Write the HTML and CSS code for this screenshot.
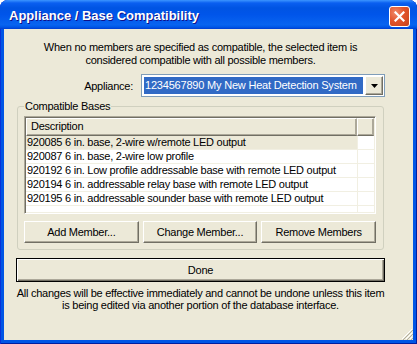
FILE: index.html
```html
<html>

<head>
  <meta name="viewport" content="width=device-width, initial-scale=1">
  <link rel="stylesheet" href="styles.css">
</head>

<body>
  <div class="window">
    <div class="titlebar">
      <span class="title">Appliance / Base Compatibility</span>
      <span class="close">
        <svg width="11" height="11" viewBox="0 0 11 11">
          <path d="M1.5 1.5 L9.5 9.5 M9.5 1.5 L1.5 9.5" stroke="#fff" stroke-width="2.2" stroke-linecap="square" />
        </svg>
      </span>
    </div>

    <div class="client">
      <p class="intro">
        When no members are specified as compatible, the selected item is<br>
        considered compatible with all possible members.
      </p>

      <div class="appliance-row">
        <span class="label">Appliance:</span>
        <div class="combo">
          <span class="combo-value">1234567890 My New Heat Detection System</span>
          <span class="combo-btn">
            <svg width="7" height="4" viewBox="0 0 7 4"><path d="M0 0 H7 L3.5 4 Z" fill="#000" /></svg>
          </span>
        </div>
      </div>

      <fieldset class="group">
        <legend>Compatible Bases</legend>
        <div class="list">
          <div class="list-head">
            <span class="col-desc">Description</span>
            <span class="col-extra"></span>
          </div>
          <div class="row selected">
            <span class="col-desc">920085 6 in. base, 2-wire w/remote LED output</span>
            <span class="col-extra"></span>
          </div>
          <div class="row">
            <span class="col-desc">920087 6 in. base, 2-wire low profile</span>
            <span class="col-extra"></span>
          </div>
          <div class="row">
            <span class="col-desc">920192 6 in. Low profile addressable base with remote LED output</span>
            <span class="col-extra"></span>
          </div>
          <div class="row">
            <span class="col-desc">920194 6 in. addressable relay base with remote LED output</span>
            <span class="col-extra"></span>
          </div>
          <div class="row">
            <span class="col-desc">920195 6 in. addressable sounder base with remote LED output</span>
            <span class="col-extra"></span>
          </div>
          <div class="row empty">
            <span class="col-desc"></span>
            <span class="col-extra"></span>
          </div>
        </div>

        <div class="buttons">
          <button class="btn">Add Member...</button>
          <button class="btn">Change Member...</button>
          <button class="btn">Remove Members</button>
        </div>
      </fieldset>

      <button class="btn done">Done</button>

      <p class="note">
        All changes will be effective immediately and cannot be undone unless this item<br>
        is being edited via another portion of the database interface.
      </p>

      <svg class="grip" width="12" height="12" viewBox="0 0 12 12">
        <path d="M11 1 L1 11 M11 5 L5 11 M11 9 L9 11" stroke="#fff" stroke-width="1" />
        <path d="M12 2 L2 12 M12 6 L6 12 M12 10 L10 12" stroke="#B0AD9E" stroke-width="1" />
      </svg>
    </div>
  </div>
</body>

</html>
```

FILE: styles.css
```css
  * {
    box-sizing: border-box;
  }

  body {
    margin: 0;
    font-family: "Liberation Sans", Arial, sans-serif;
    font-size: 11px;
    letter-spacing: -0.25px;
    color: #000000;
    background: #ffffff;
  }

  .window {
    width: 417px;
    height: 344px;
    display: flex;
    flex-direction: column;
    background: #0055e5;
    border-radius: 8px 8px 0 0;
    box-shadow: inset 1px 0 #0831d9, inset -1px 0 #001ea0, inset 0 -1px #001ea0;
  }

  .titlebar {
    height: 29px;
    display: flex;
    align-items: center;
    justify-content: space-between;
    padding: 0 7px 0 9px;
    border-radius: 8px 8px 0 0;
    background: linear-gradient(#3c95ff 0, #0a5ff0 3px, #0054e3 8px, #0055ea 50%, #0864f0 85%, #0058e8 93%, #003dd0 100%);
  }

  .title {
    color: #ffffff;
    font-weight: bold;
    font-size: 13px;
    letter-spacing: 0;
    text-shadow: 1px 1px #0f1089;
    margin-top: 2px;
  }

  .close {
    width: 21px;
    height: 21px;
    margin-top: 3px;
    display: flex;
    align-items: center;
    justify-content: center;
    border: 1px solid #ffffff;
    border-radius: 3px;
    background: radial-gradient(circle at 30% 30%, #f08a6a 0, #e2542c 45%, #c7431b 100%);
  }

  .client {
    flex: 1;
    margin: 0 4px 4px;
    padding: 12px 28px 0 12px;
    background: #ece9d8;
    display: flex;
    flex-direction: column;
    position: relative;
  }

  .intro {
    margin: 0;
    text-align: center;
    line-height: 13px;
  }

  .appliance-row {
    margin-top: 7px;
    display: flex;
    justify-content: flex-end;
    align-items: center;
    gap: 8px;
  }

  .combo {
    width: 244px;
    height: 23px;
    display: flex;
    padding: 1px;
    border: 1px solid #7f9db9;
    background: #ffffff;
  }

  .combo-value {
    flex: 1;
    min-width: 0;
    margin: 1px 2px 1px 1px;
    padding-left: 1px;
    background: #316ac5;
    color: #ffffff;
    font-size: 11px;
    letter-spacing: -0.2px;
    line-height: 17px;
    white-space: nowrap;
  }

  .combo-btn {
    flex: none;
    width: 18px;
    display: flex;
    align-items: center;
    justify-content: center;
    background: #ece9d8;
    border: 1px solid;
    border-color: #ffffff #716f64 #716f64 #ffffff;
    box-shadow: inset -1px -1px #aca899;
  }

  .group {
    margin: 3px 1px 0;
    padding: 4px 7px 6px 6px;
    border: 1px solid #d0d0bf;
    border-radius: 3px;
    min-width: 0;
  }

  .group legend {
    padding: 0 1px;
    line-height: 12px;
  }

  .list {
    height: 98px;
    padding: 1px;
    overflow: hidden;
    background: #ffffff;
    border: 1px solid;
    border-color: #aca899 #ffffff #ffffff #aca899;
    box-shadow: inset 1px 1px #716f64, inset -1px -1px #f1efe2;
  }

  .list-head,
  .row {
    display: flex;
  }

  .col-desc {
    width: 331px;
    white-space: nowrap;
    overflow: hidden;
  }

  .col-extra {
    width: 17px;
  }

  .list-head span {
    height: 18px;
    line-height: 15px;
    background: #ece9d8;
    border: 1px solid;
    border-color: #ffffff #aca899 #716f64 #ffffff;
    box-shadow: inset -1px -1px #aca899;
  }

  .list-head .col-desc {
    padding-left: 4px;
  }

  .row span {
    height: 14px;
    line-height: 13px;
    border-bottom: 1px solid #f1efe2;
  }

  .row .col-desc {
    padding-left: 1px;
  }

  .row .col-extra {
    border-left: 1px solid #f1efe2;
  }

  .row.selected .col-desc {
    background: #ece9d8;
  }

  .buttons {
    margin-top: 7px;
    display: grid;
    grid-template-columns: repeat(3, 1fr);
    gap: 4px;
  }

  .btn {
    height: 22px;
    padding: 0;
    font-family: "Liberation Sans", Arial, sans-serif;
    font-size: 11px;
    letter-spacing: -0.25px;
    color: #000000;
    background: #ece9d8;
    border: 1px solid;
    border-color: #ffffff #716f64 #716f64 #ffffff;
    box-shadow: inset -1px -1px #aca899;
  }

  .done {
    margin-top: 8px;
    height: 24px;
    width: 100%;
    border: 1px solid #000000;
    box-shadow: inset 1px 1px #ffffff, inset -1px -1px #716f64, inset -2px -2px #aca899;
  }

  .note {
    margin: 5px 0 0;
    text-align: center;
    line-height: 12px;
    white-space: nowrap;
  }

  .grip {
    position: absolute;
    right: 0;
    bottom: 0;
  }
```
